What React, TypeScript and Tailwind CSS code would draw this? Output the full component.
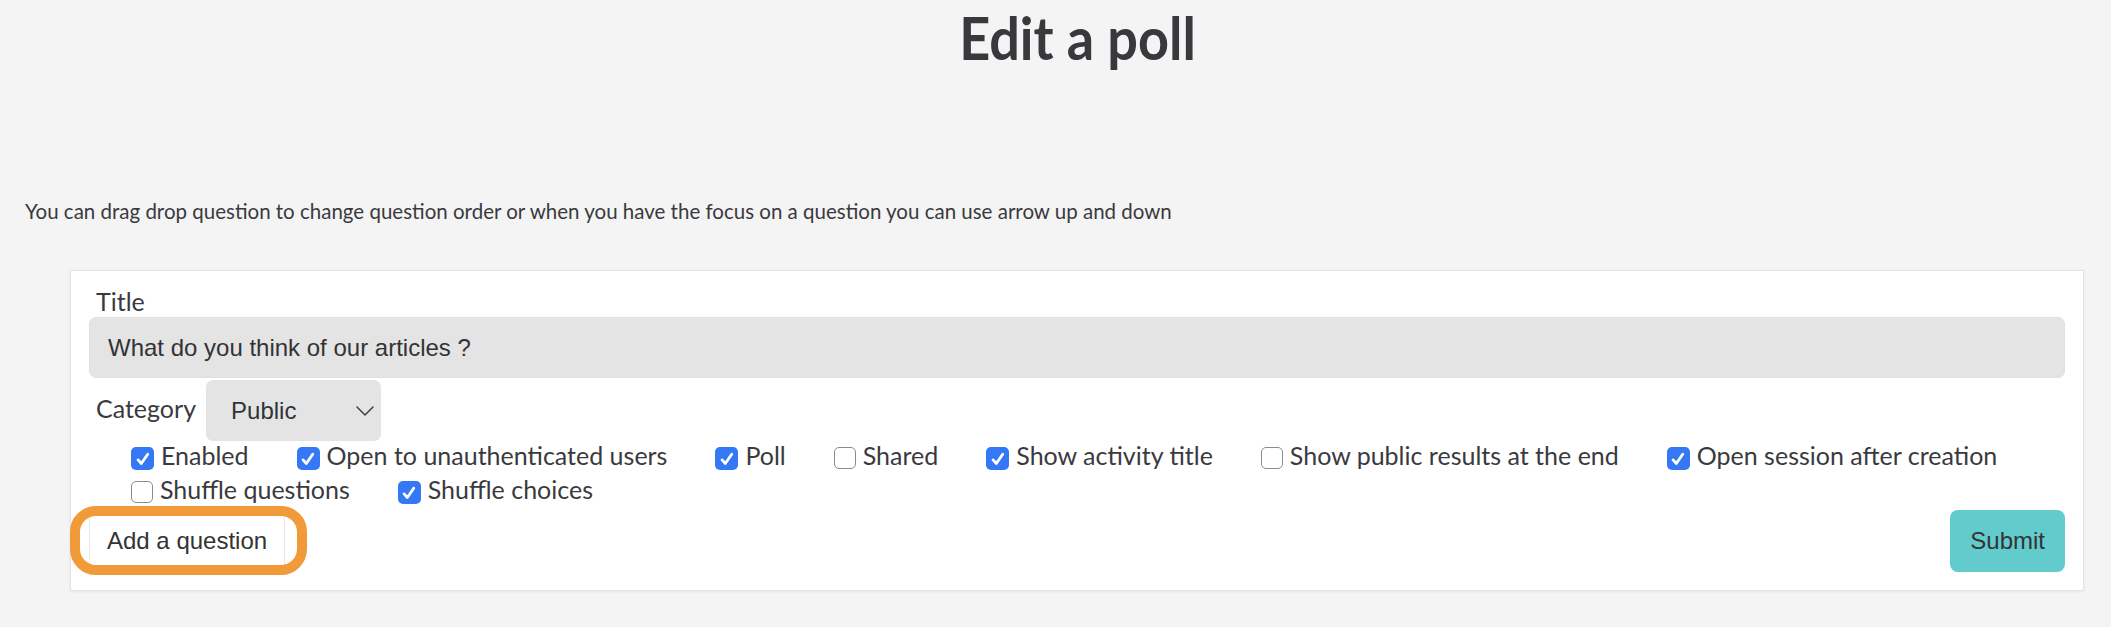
import { ChevronDown } from "lucide-react";

interface Option {
  label: string;
  checked: boolean;
}

const options: Option[] = [
  { label: "Enabled", checked: true },
  { label: "Open to unauthenticated users", checked: true },
  { label: "Poll", checked: true },
  { label: "Shared", checked: false },
  { label: "Show activity title", checked: true },
  { label: "Show public results at the end", checked: false },
  { label: "Open session after creation", checked: true },
  { label: "Shuffle questions", checked: false },
  { label: "Shuffle choices", checked: true },
];

function Checkbox({ checked }: { checked: boolean }) {
  if (checked) {
    return (
      <span className="mt-[7px] flex h-[23px] w-[23px] shrink-0 items-center justify-center rounded-[5px] bg-[#3478f6]">
        <svg viewBox="0 0 16 16" className="h-[18px] w-[18px]">
          <path d="M3.6 8.8 L6.5 12 L12.2 3.8" fill="none" stroke="#fff" strokeWidth="2.5" strokeLinecap="round" strokeLinejoin="round" />
        </svg>
      </span>
    );
  }
  return (
    <span className="mt-[7px] block h-[22px] w-[22px] shrink-0 rounded-[5px] border-[1.5px] border-[#8b8b8b] bg-white" />
  );
}

export default function App() {
  return (
    <div className="min-h-[627px] bg-[#f4f4f4] pt-[2px] font-['Lato',sans-serif] text-[#3a3a3e]">
      <h1 className="scale-y-110 pl-[44px] text-center text-[54px] font-bold leading-[72px] text-[#38383d]">Edit a poll</h1>

      <p className="mt-[124px] pl-[25px] text-[20.5px] leading-[26px]">
        You can drag drop question to change question order or when you have the focus on a question you can use arrow up and down
      </p>

      <div className="mt-[46px] pl-[70px] pr-[27px]">
        <div className="border border-[#e3e3e3] bg-white px-[18px] pb-[18px] pt-[15px] shadow-[0_1px_3px_rgba(0,0,0,0.06)]">
          <label className="block pl-[7px] text-[25px] leading-[30px]">Title</label>
          <input
            readOnly
            value="What do you think of our articles ?"
            className="mt-px block h-[61px] w-full rounded-[7px] border border-[#e0e0e0] bg-[#e4e4e4] pl-[18px] font-['Liberation_Sans',Arial,sans-serif] text-[24px] text-[#333336] outline-none"
          />

          <div className="mt-[2px] flex items-center">
            <span className="pb-[5px] pl-[7px] text-[25px] leading-[30px]">Category</span>
            <div className="ml-[10px] flex h-[61px] w-[175px] items-center justify-between rounded-[7px] bg-[#e4e4e4] pl-[25px] font-['Liberation_Sans',Arial,sans-serif] text-[24px] text-[#333336]">
              <span>Public</span>
              <ChevronDown className="h-[32px] w-[32px] text-[#444]" strokeWidth={1.2} />
            </div>
          </div>

          <div className="-mt-px flex flex-wrap gap-x-[48px] gap-y-[4px] pl-[42px]">
            {options.map((o) => (
              <div key={o.label} className="flex items-start gap-[7px]">
                <Checkbox checked={o.checked} />
                <span className="text-[25px] leading-[30px]">{o.label}</span>
              </div>
            ))}
          </div>

          <div className="mt-[6px] flex items-center justify-between font-['Liberation_Sans',Arial,sans-serif] text-[24px] text-[#333336]">
            <div className="relative">
              <button className="h-[62px] rounded-[6px] border border-[#e6e6e6] bg-white px-[17px]">Add a question</button>
              <span className="pointer-events-none absolute left-[-19px] top-[-4px] h-[69px] w-[237px] rounded-[26px] border-[10px] border-[#f19a3a]" />
            </div>
            <button className="h-[62px] rounded-[8px] bg-[#62cbcb] px-[20px]">Submit</button>
          </div>
        </div>
      </div>
    </div>
  );
}
